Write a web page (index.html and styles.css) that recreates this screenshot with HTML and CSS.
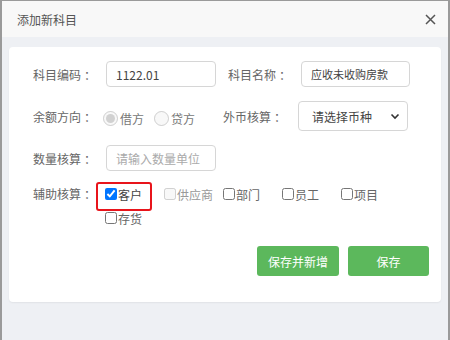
FILE: index.html
```html
<!DOCTYPE html>
<html lang="zh-CN">
<head>
    <meta charset="UTF-8">
    <title>添加新科目</title>
    <link rel="stylesheet" href="styles.css">
</head>
<body>
    <div class="dialog">
        <div class="dialog-header">
            <span class="dialog-title">添加新科目</span>
            <button class="close-button">
                <svg width="11" height="11" viewBox="0 0 11 11"><path d="M1 1L10 10M10 1L1 10" stroke="#555" stroke-width="1.5" fill="none"/></svg>
            </button>
        </div>
        <div class="dialog-body">
            <div class="card">
                <div class="row">
                    <span class="label">科目编码<i class="colon">：</i></span>
                    <input class="text-input" type="text" value="1122.01">
                    <span class="label label-second">科目名称<i class="colon">：</i></span>
                    <input class="text-input text-input-name" type="text" value="应收未收购房款">
                </div>
                <div class="row row-tall">
                    <span class="label">余额方向<i class="colon">：</i></span>
                    <div class="radio-group">
                        <label class="radio"><input type="radio" name="dir" checked disabled>借方</label>
                        <label class="radio"><input type="radio" name="dir" disabled>贷方</label>
                    </div>
                    <span class="label label-wide">外币核算<i class="colon">：</i></span>
                    <div class="select">
                        <span>请选择币种</span>
                        <svg width="10" height="7" viewBox="0 0 10 7"><path d="M1.5 1.5L5 5L8.5 1.5" stroke="#333" stroke-width="1.6" fill="none"/></svg>
                    </div>
                </div>
                <div class="row">
                    <span class="label">数量核算<i class="colon">：</i></span>
                    <input class="text-input" type="text" placeholder="请输入数量单位">
                </div>
                <div class="row row-checks">
                    <span class="label label-line">辅助核算<i class="colon">：</i></span>
                    <div class="check-group">
                        <label class="check check-marked"><input type="checkbox" checked>客户</label>
                        <label class="check check-disabled"><input type="checkbox" disabled>供应商</label>
                        <label class="check"><input type="checkbox">部门</label>
                        <label class="check"><input type="checkbox">员工</label>
                        <label class="check"><input type="checkbox">项目</label>
                        <label class="check"><input type="checkbox">存货</label>
                    </div>
                </div>
                <div class="actions">
                    <button class="btn btn-wide">保存并新增</button>
                    <button class="btn">保存</button>
                </div>
            </div>
        </div>
    </div>
</body>
</html>
```

FILE: styles.css
```css
* {
    box-sizing: border-box;
}

body {
    margin: 0;
    font-family: "Noto Sans CJK SC", "Noto Sans", sans-serif;
    background: #eef0f4;
}

.dialog {
    width: 450px;
    height: 340px;
    border: 1px solid #9a9a9a;
    border-left-width: 2px;
    border-right-width: 2px;
    border-bottom: none;
    background: #eef0f4;
    display: flex;
    flex-direction: column;
}

.dialog-header {
    height: 36px;
    background: #f8f8f8;
    display: flex;
    align-items: center;
    justify-content: space-between;
    padding: 0 12px 0 15px;
}

.dialog-title {
    font-size: 12px;
    color: #555;
}

.close-button {
    background: none;
    border: none;
    padding: 0;
    display: flex;
    cursor: pointer;
}

.dialog-body {
    padding: 10px 7px 0 7px;
}

.card {
    background: #fff;
    border-radius: 4px;
    box-shadow: 0 1px 2px rgba(0, 0, 0, 0.06);
    padding: 14px 12px 26px 24px;
}

.row {
    display: flex;
    align-items: center;
    height: 26px;
    margin-bottom: 14px;
}

.row-tall {
    height: 30px;
}

.row-checks {
    align-items: flex-start;
    height: auto;
    margin-top: -3px;
    margin-bottom: 16px;
}

.label {
    width: 73px;
    flex-shrink: 0;
    font-size: 12px;
    color: #666;
}

.colon {
    font-style: normal;
    margin-left: 3px;
}

.label-second {
    margin-left: 12px;
}

.label-wide {
    width: 75px;
}

.label-line {
    line-height: 24px;
}

.text-input {
    width: 110px;
    height: 26px;
    border: 1px solid #d6d6d6;
    border-radius: 4px;
    padding: 0 9px;
    font-family: inherit;
    font-size: 11px;
    color: #444;
    outline: none;
}

.text-input:first-of-type {
    font-size: 12px;
}

.text-input-name {
    width: 109px;
    font-size: 11px;
}

.text-input::placeholder {
    color: #aaa;
}

.radio-group {
    width: 120px;
    margin-left: -3px;
    display: flex;
    align-items: center;
    gap: 10px;
}

.radio {
    display: flex;
    align-items: center;
    gap: 2px;
    font-size: 12px;
    color: #777;
    margin-top: 5px;
}

.radio input {
    width: 15px;
    height: 15px;
    margin: 0;
}

.select {
    width: 110px;
    height: 30px;
    border: 1px solid #d6d6d6;
    border-radius: 4px;
    display: flex;
    align-items: center;
    justify-content: space-between;
    padding: 0 7px 0 13px;
    font-size: 12px;
    color: #444;
}

.check-group {
    width: 300px;
    margin-left: -1px;
    display: flex;
    flex-wrap: wrap;
}

.check {
    width: 59px;
    height: 24px;
    display: flex;
    align-items: center;
    gap: 1px;
    font-size: 12px;
    color: #666;
    position: relative;
}

.check input {
    width: 12px;
    height: 12px;
    margin: 0;
}

.check-marked {
    color: #444;
}

.check-marked::after {
    content: "";
    position: absolute;
    left: -9px;
    top: 0;
    width: 52px;
    height: 25px;
    border: 2px solid #e8141b;
    border-radius: 3px;
}

.check-disabled {
    color: #999;
}

.actions {
    display: flex;
    justify-content: flex-end;
    gap: 9px;
}

.btn {
    width: 81px;
    height: 30px;
    border: none;
    border-radius: 3px;
    background: #5cb85c;
    color: #fff;
    font-family: inherit;
    font-size: 12px;
    cursor: pointer;
}

.btn-wide {
    width: 82px;
}
```
